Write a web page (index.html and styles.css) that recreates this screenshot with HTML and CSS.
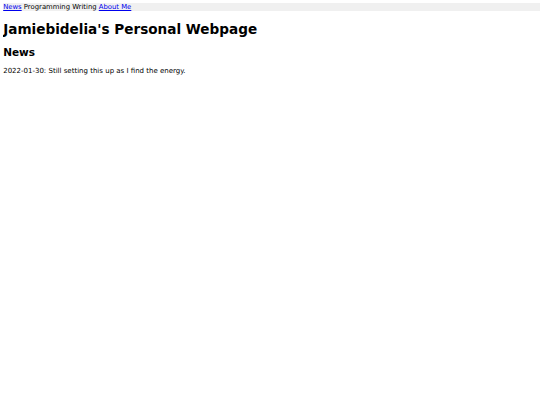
FILE: index.html
```html
<!DOCTYPE html>
<html>
<head>
<meta charset="utf-8">
<title>Jamiebidelia's Personal Webpage</title>
<link rel="stylesheet" href="styles.css">
</head>
<body>
<nav class="topnav"><a href="#">News</a> Programming Writing <a href="#">About Me</a></nav>
<h1 class="title">Jamiebidelia's Personal Webpage</h1>
<h2 class="section">News</h2>
<p class="entry">2022-01-30: Still setting this up as I find the energy.</p>
</body>
</html>
```
FILE: styles.css
```css
html { background: #fff; }
body {
  margin: 3.2px 0 0 3.2px;
  font-family: "DejaVu Sans", sans-serif;
  font-size: 7px;
  color: #000;
}
.topnav {
  background: #f0f0f0;
  font-size: 6.85px;
  line-height: 8px;
}
.topnav a { color: #0000ee; }
.title {
  font-size: 13.6px;
  margin: 9.4px 0;
}
.section {
  font-size: 10.5px;
  margin: 8.7px 0;
}
.entry {
  margin: 7px 0;
}
```
